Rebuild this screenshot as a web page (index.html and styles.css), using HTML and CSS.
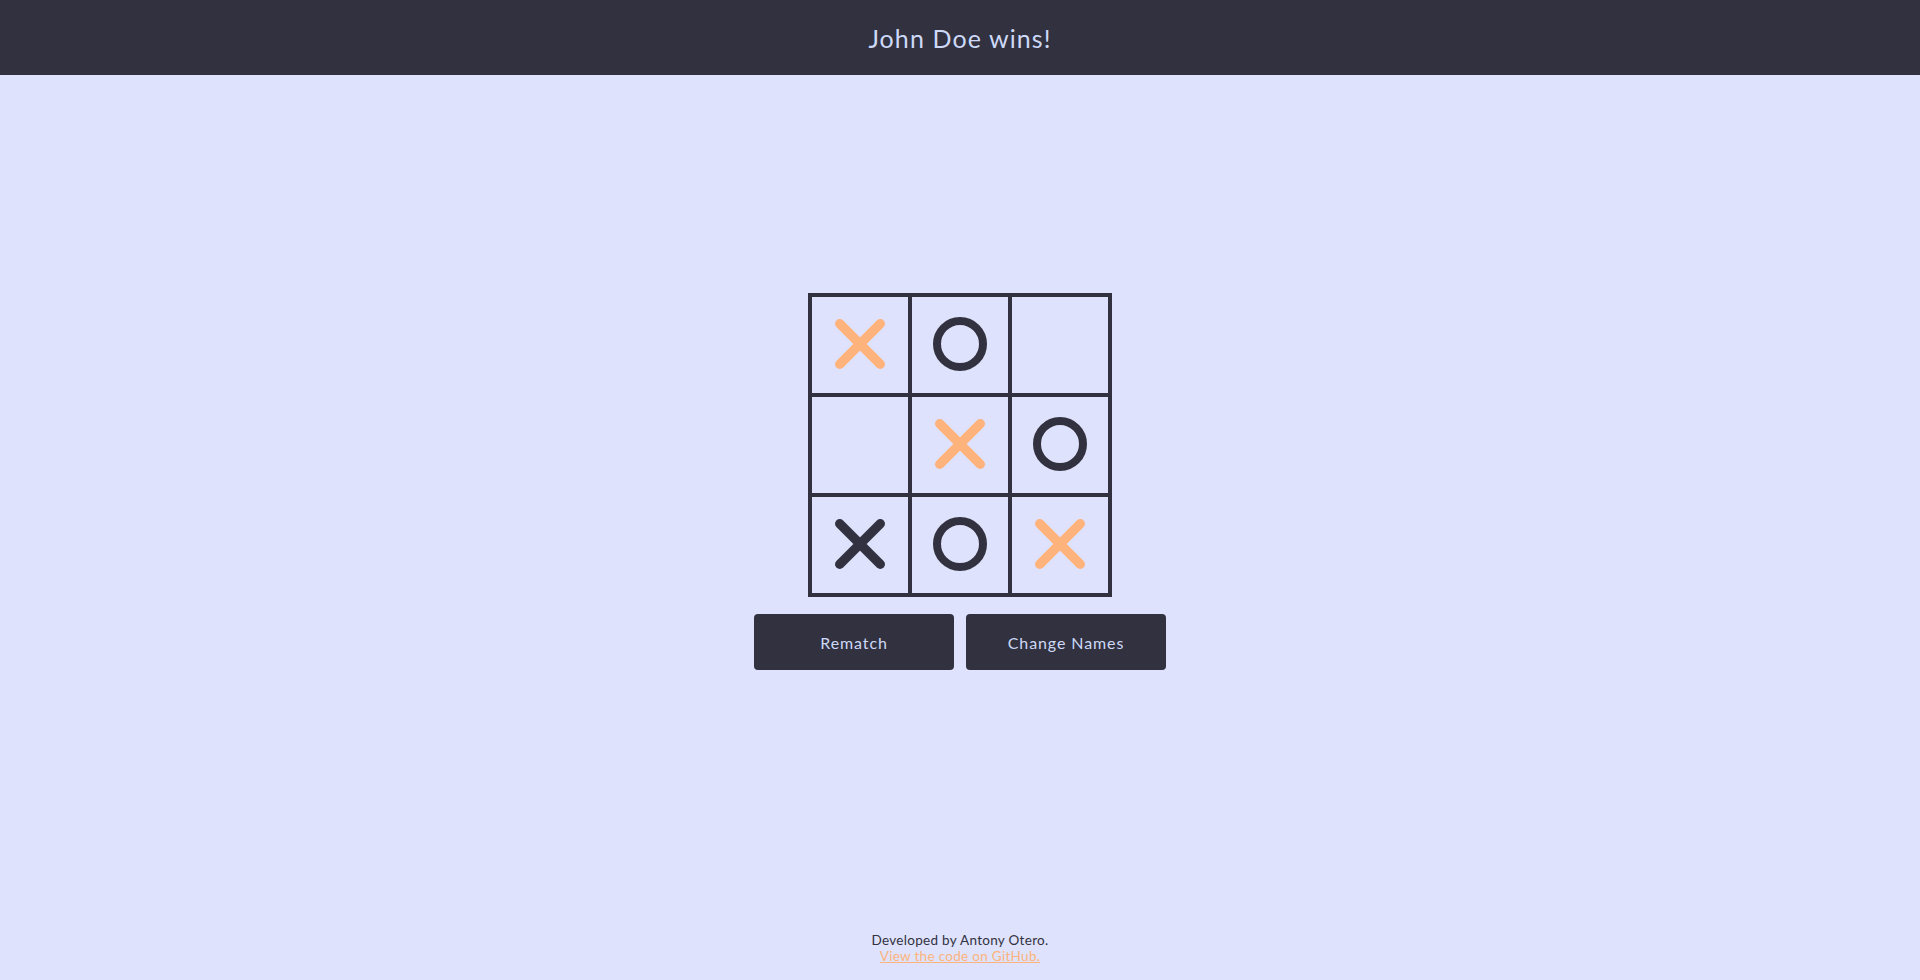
FILE: index.html
```html
<!DOCTYPE html>
<html lang="en">
<head>
<meta charset="utf-8">
<title>Tic Tac Toe</title>
<link rel="stylesheet" href="styles.css">
</head>
<body>
<header class="top-bar">
  <h1 class="status">John Doe wins!</h1>
</header>
<main class="game">
  <div class="board">
    <div class="cell"><svg class="mark mark-x orange" viewBox="0 0 50 50"><line x1="4.75" y1="4.75" x2="45.25" y2="45.25"/><line x1="45.25" y1="4.75" x2="4.75" y2="45.25"/></svg></div>
    <div class="cell"><svg class="mark mark-o" viewBox="0 0 54 54"><circle cx="27" cy="27" r="23"/></svg></div>
    <div class="cell"></div>
    <div class="cell"></div>
    <div class="cell"><svg class="mark mark-x orange" viewBox="0 0 50 50"><line x1="4.75" y1="4.75" x2="45.25" y2="45.25"/><line x1="45.25" y1="4.75" x2="4.75" y2="45.25"/></svg></div>
    <div class="cell"><svg class="mark mark-o" viewBox="0 0 54 54"><circle cx="27" cy="27" r="23"/></svg></div>
    <div class="cell"><svg class="mark mark-x dark" viewBox="0 0 50 50"><line x1="4.75" y1="4.75" x2="45.25" y2="45.25"/><line x1="45.25" y1="4.75" x2="4.75" y2="45.25"/></svg></div>
    <div class="cell"><svg class="mark mark-o" viewBox="0 0 54 54"><circle cx="27" cy="27" r="23"/></svg></div>
    <div class="cell"><svg class="mark mark-x orange" viewBox="0 0 50 50"><line x1="4.75" y1="4.75" x2="45.25" y2="45.25"/><line x1="45.25" y1="4.75" x2="4.75" y2="45.25"/></svg></div>
  </div>
  <div class="actions">
    <button class="btn" type="button">Rematch</button>
    <button class="btn" type="button">Change Names</button>
  </div>
</main>
<footer class="footer">
  <p class="credit">Developed by Antony Otero.</p>
  <a class="repo-link" href="#">View the code on GitHub.</a>
</footer>
</body>
</html>
```
FILE: styles.css
```css
* { box-sizing: border-box; }

html, body { height: 100%; }

body {
  margin: 0;
  height: 100vh;
  overflow: hidden;
  display: flex;
  flex-direction: column;
  background: #dee2fc;
  color: #32313f;
  font-family: "Lato", "Open Sans", sans-serif;
}

.top-bar {
  height: 75px;
  flex: 0 0 75px;
  background: #32313f;
  display: flex;
  align-items: center;
  justify-content: center;
}

.status {
  margin: 0;
  font-weight: 400;
  font-size: 25px;
  letter-spacing: 1.1px;
  color: #cdd9f8;
}

.game {
  flex: 1;
  display: flex;
  flex-direction: column;
  align-items: center;
  padding-top: 218px;
}

.board {
  display: grid;
  grid-template-columns: repeat(3, 100px);
  grid-template-rows: repeat(3, 100px);
  border: 2px solid #32313f;
}

.cell {
  border: 2px solid #32313f;
  display: flex;
  align-items: center;
  justify-content: center;
}

.mark { display: block; }

.mark-x {
  width: 50px;
  height: 50px;
  margin-top: -2px;
}

.mark-x line {
  stroke-width: 9.5;
  stroke-linecap: round;
}

.mark-x.orange line { stroke: #fdb37b; }
.mark-x.dark line { stroke: #32313f; }

.mark-o {
  width: 54px;
  height: 54px;
  margin-top: -2px;
}

.mark-o circle {
  fill: none;
  stroke: #32313f;
  stroke-width: 8;
}

.actions {
  display: flex;
  gap: 12px;
  margin-top: 17px;
}

.btn {
  width: 200px;
  height: 56px;
  border: none;
  border-radius: 4px;
  background: #32313f;
  color: #cdd9f8;
  font-family: inherit;
  font-size: 16px;
  letter-spacing: 0.9px;
  cursor: pointer;
}

.footer {
  display: flex;
  flex-direction: column;
  align-items: center;
  padding-bottom: 16px;
  font-size: 13.5px;
  line-height: 16px;
  letter-spacing: 0.3px;
}

.credit {
  margin: 0;
  color: #32313f;
}

.repo-link {
  color: #fdb37b;
  text-decoration: underline;
}
```
